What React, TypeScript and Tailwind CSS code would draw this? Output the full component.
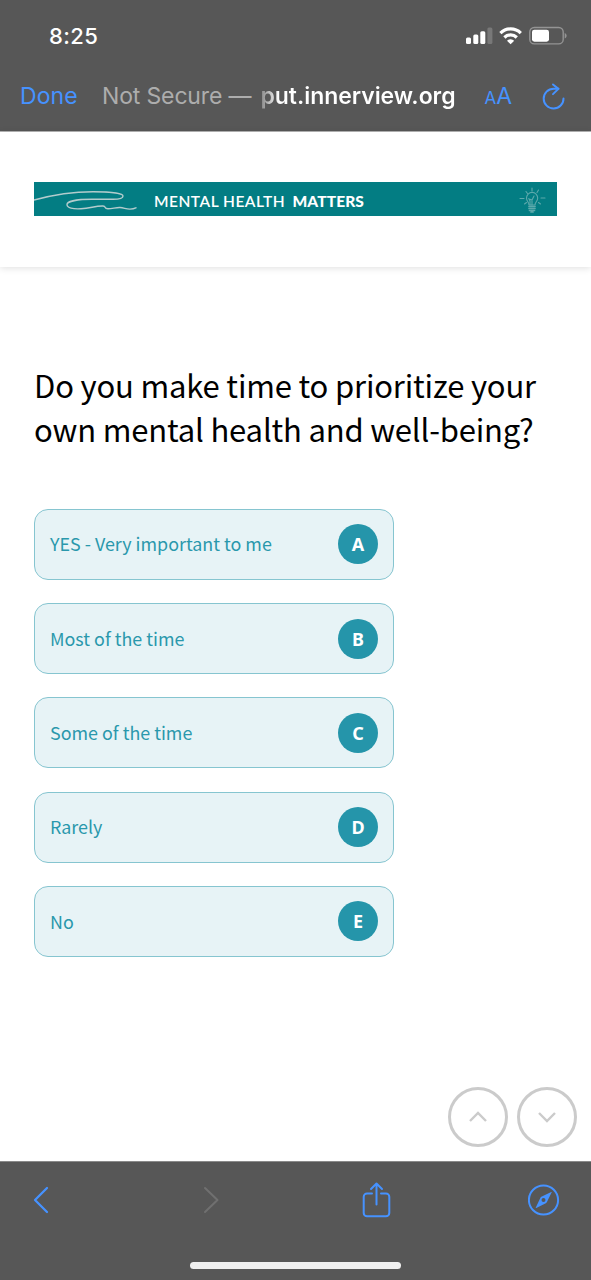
const options = [
  { key: "A", label: "YES - Very important to me" },
  { key: "B", label: "Most of the time" },
  { key: "C", label: "Some of the time" },
  { key: "D", label: "Rarely" },
  { key: "E", label: "No" },
];

function StatusIcons() {
  return (
    <svg width="102" height="20" viewBox="465 25.5 102 20" fill="none">
      <g fill="#fff">
        <rect x="466" y="37" width="5" height="6.5" rx="1.5" />
        <rect x="473.3" y="34" width="5" height="9.5" rx="1.5" />
        <rect x="480.3" y="30.7" width="5" height="12.8" rx="1.5" />
        <rect x="487.4" y="27" width="5" height="16.5" rx="1.5" fillOpacity="0.2" />
      </g>
      <g stroke="#fff" strokeWidth="3.2">
        <path d="M500.4 32.6a14.5 14.5 0 0 1 20.4 0" />
        <path d="M504.4 37a8.8 8.8 0 0 1 12.4 0" />
      </g>
      <path d="M507 40.3a5 5 0 0 1 7.2 0l-3.6 3.4z" fill="#fff" />
      <rect x="529.8" y="27" width="33.4" height="16.4" rx="4.5" stroke="#949494" strokeWidth="1.4" />
      <rect x="532" y="29.2" width="17" height="12" rx="2.4" fill="#fff" />
      <path d="M564.7 32.5c2.6 1 2.6 4.5 0 5.5z" fill="#949494" />
    </svg>
  );
}

function BrowserHeader() {
  return (
    <header className="h-[132px] shrink-0 border-b border-[#b5b5b5] bg-[#575757] font-['Inter',sans-serif]">
      <div className="flex h-[71px] items-center justify-between pl-[49px] pr-6">
        <span className="text-[22px] font-medium leading-none tracking-[0.4px] text-white">8:25</span>
        <StatusIcons />
      </div>
      <div className="flex h-[51px] items-center whitespace-nowrap text-[23px] leading-none">
        <span className="ml-[20px] w-[82px] tracking-[0.1px] text-[#4692ff]">Done</span>
        <span className="w-[158.5px] tracking-[-0.15px] text-[#adadad]">Not Secure —</span>
        <span className="mb-0.5 w-[224px] bg-linear-to-r from-[#8a8a8a] to-white to-[8%] bg-clip-text font-semibold leading-8 tracking-[-0.05px] text-transparent">
          put.innerview.org
        </span>
        <span className="flex w-[56px] items-baseline text-[#4692ff]">
          <span className="text-[17px]">A</span>
          <span>A</span>
        </span>
        <svg width="26" height="28" viewBox="540 82 26 28" fill="none" stroke="#4692ff" strokeWidth="2" strokeLinecap="round" strokeLinejoin="round">
          <path d="M562.5 97.5a9.9 9.9 0 1 1-9.9-9.8h4.8" />
          <path d="M552 83.5l5.4 4.4-5.4 5.2" />
        </svg>
      </div>
    </header>
  );
}

function Banner() {
  return (
    <div className="mx-[34px] flex h-[34px] w-[523px] items-center bg-[#037d83] font-['Lato',sans-serif] text-[15.5px] leading-none text-white">
      <svg width="120" height="34" viewBox="0 0 120 34" fill="none" stroke="#b3cccd" strokeWidth="1.4" strokeLinecap="round">
        <path d="M0 18C20 12.500 40 9.700 59 9.700c15 0 30 1.500 30 4.300 0 2.300-4 3.300-10 3.300H58c-14 0-25 2-25 5.200 0 3.500 6 4.800 14 4.300 10-.6 14-3 22-2.800 3.500.2.500 2.800 5 2.800s8-1.500 12-1.300 6 1.700 10 1.600 5-.8 6-1.300" />
      </svg>
      <span className="w-[138.5px] whitespace-nowrap pt-[5px] font-semibold tracking-[0.5px]">MENTAL HEALTH</span>
      <span className="pt-[5px] font-black tracking-[0.1px]">MATTERS</span>
      <svg className="ml-auto mr-[11px] mt-1" width="28" height="28" viewBox="0 0 28 28" fill="none" stroke="#5da9ac" strokeWidth="1.1" strokeLinecap="round">
        <path d="M14 1v3M8 4.5l1.500 2M20.500 3L19 5.500M2 11.500h4M23 11h4M6.500 17l2-1.500M20.500 15.500l2 1.500" />
        <path d="M11 18c0-3-2.500-3.500-2.500-7a5.600 5.600 0 0 1 11.200 0c0 3.500-2.700 4-2.700 7z" />
        <path d="M12 18v-4l-1-2 3 1 2-4M14 14v4" />
        <path d="M11 19.500h6M11 21.500h6M11.500 23.500h5M13 25h2" strokeWidth="1.7" />
      </svg>
    </div>
  );
}

function Option({ letter, label }: { letter: string; label: string }) {
  return (
    <button className="flex h-[71px] w-[360px] items-center justify-between rounded-[14px] border-[1.5px] border-[#86c5d0] bg-[#e7f3f6] px-[15px] text-left text-[#2a98ac]">
      <span className="text-[17.9px] leading-none">{label}</span>
      <span className="flex size-10 items-center justify-center rounded-full bg-[#2595aa] font-['Noto_Sans',sans-serif] text-[18px] font-bold leading-none text-white">
        {letter}
      </span>
    </button>
  );
}

function NavCircle({ d }: { d: string }) {
  return (
    <button className="flex size-[60px] items-center justify-center rounded-full border-[3px] border-[#cbcbcb]">
      <svg width="20" height="12" viewBox="0 0 20 12" fill="none" stroke="#cbcbcb" strokeWidth="2.4">
        <path d={d} />
      </svg>
    </button>
  );
}

function BrowserToolbar() {
  return (
    <footer className="flex h-[119px] shrink-0 flex-col items-center border-t border-[#8a8a8a] bg-[#575757]">
      <div className="flex h-[76px] w-full items-center pl-8 text-[#4692ff]">
        <svg className="mr-[152px]" width="18" height="28" viewBox="0 0 18 28" fill="none" stroke="currentColor" strokeWidth="2.3" strokeLinecap="round" strokeLinejoin="round">
          <path d="M15 2L3 14l12 12" />
        </svg>
        <svg className="mr-[142px]" width="18" height="28" viewBox="0 0 18 28" fill="none" stroke="#707070" strokeWidth="2" strokeLinecap="round" strokeLinejoin="round">
          <path d="M3 2l12.500 12L3 26" />
        </svg>
        <svg className="mr-[136px]" width="30" height="36" viewBox="0.5 0.5 30 36" fill="none" stroke="currentColor" strokeWidth="2" strokeLinecap="round" strokeLinejoin="round">
          <path d="M10.500 12H5.500A3.300 3.300 0 0 0 2.200 15.300v16.200a3.300 3.300 0 0 0 3.300 3.300h19a3.300 3.300 0 0 0 3.300-3.300V15.300a3.300 3.300 0 0 0-3.300-3.300H19.500M15 23V2.500M9.500 7.500L15 2l5.500 5.500" />
        </svg>
        <svg width="32" height="32" viewBox="0 0 32 32">
          <circle cx="15.500" cy="16" r="14.6" fill="none" stroke="currentColor" strokeWidth="2" />
          <path
            fill="currentColor"
            fillRule="evenodd"
            d="M23.200 8.100q.8-.3.400.5L18.800 18.300q-.4.700-1 1L8.300 24q-.9.400-.5-.5l4.500-9.600q.3-.7 1-1.100zM15.500 14a2 2 0 1 0 0 4 2 2 0 0 0 0-4z"
          />
        </svg>
      </div>
      <div className="mt-[23.500px] h-[7.500px] w-[211px] rounded-full bg-[#efefef]" />
    </footer>
  );
}

export default function App() {
  return (
    <div className="flex h-[1280px] w-[591px] flex-col overflow-hidden bg-white font-['Noto_Sans_CJK_SC',sans-serif]">
      <BrowserHeader />
      <div className="h-[135px] shrink-0 pt-[50px] shadow-[0_1px_7px_rgba(0,0,0,0.13)]">
        <Banner />
      </div>
      <main className="flex flex-1 flex-col pl-[34px] pt-[96px]">
        <h1 className="whitespace-nowrap text-[31px] leading-[44px] tracking-[-0.17px] text-black">
          Do you make time to prioritize your
          <br />
          own mental health and well-being?
        </h1>
        <div className="mt-[57.8px] flex flex-col gap-[23.3px]">
          {options.map((o) => (
            <Option key={o.key} letter={o.key} label={o.label} />
          ))}
        </div>
        <div className="mb-3.5 mr-[14.5px] mt-auto flex justify-end gap-[8.5px]">
          <NavCircle d="M2 10l8-8 8 8" />
          <NavCircle d="M2 2l8 8 8-8" />
        </div>
      </main>
      <BrowserToolbar />
    </div>
  );
}
